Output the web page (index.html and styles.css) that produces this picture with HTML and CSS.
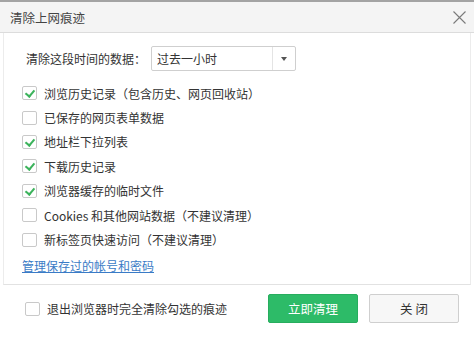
FILE: index.html
```html
<!DOCTYPE html>
<html lang="zh-CN">
<head>
    <meta charset="UTF-8">
    <title>清除上网痕迹</title>
    <link rel="stylesheet" href="styles.css">
</head>
<body>
    <div class="dialog">
        <div class="dialog-header">
            <span class="dialog-title">清除上网痕迹</span>
            <svg class="close-icon" width="13" height="13" viewBox="0 0 13 13">
                <path d="M0.5 0.5 L12.5 12.5 M12.5 0.5 L0.5 12.5" stroke="#7a7a7a" stroke-width="1.1" fill="none"/>
            </svg>
        </div>

        <div class="dialog-body">
            <div class="time-row">
                <span class="time-label">清除这段时间的数据：</span>
                <div class="select">
                    <span class="select-value">过去一小时</span>
                    <span class="select-arrow"></span>
                </div>
            </div>

            <ul class="options">
                <li class="option"><span class="checkbox checked"></span>浏览历史记录（包含历史、网页回收站）</li>
                <li class="option"><span class="checkbox"></span>已保存的网页表单数据</li>
                <li class="option"><span class="checkbox checked"></span>地址栏下拉列表</li>
                <li class="option"><span class="checkbox checked"></span>下载历史记录</li>
                <li class="option"><span class="checkbox checked"></span>浏览器缓存的临时文件</li>
                <li class="option"><span class="checkbox"></span>Cookies 和其他网站数据（不建议清理）</li>
                <li class="option"><span class="checkbox"></span>新标签页快速访问（不建议清理）</li>
            </ul>

            <a class="manage-link" href="#">管理保存过的帐号和密码</a>
        </div>

        <div class="dialog-footer">
            <label class="option exit-option"><span class="checkbox"></span>退出浏览器时完全清除勾选的痕迹</label>
            <button class="btn btn-primary">立即清理</button>
            <button class="btn btn-default">关 闭</button>
        </div>
    </div>
</body>
</html>
```

FILE: styles.css
```css
:root {
    --green: #2dbb68;
    --check: #3cb35c;
    --border: #c9c9c9;
    --text: #333;
}

* {
    box-sizing: border-box;
    margin: 0;
    padding: 0;
}

body {
    width: 474px;
    height: 338px;
    overflow: hidden;
    background: #fff;
    font-family: "Noto Sans CJK SC", "Liberation Sans", sans-serif;
    font-size: 12px;
    color: var(--text);
}

.dialog {
    height: 338px;
    display: flex;
    flex-direction: column;
}

.dialog-header {
    height: 33px;
    border-top: 2px solid #a3a3a3;
    border-bottom: 1px solid #dcdcdc;
    background: #f4f4f4;
    display: flex;
    align-items: center;
    justify-content: space-between;
    padding: 0 8px 0 10px;
}

.dialog-title {
    font-size: 12.5px;
    color: #444;
}

.close-icon {
    margin-top: 1px;
}

.dialog-body {
    margin: 0 3px;
    border-left: 1px solid #ececec;
    border-right: 1px solid #ececec;
    border-bottom: 1px solid #e2e2e2;
    padding: 13px 0 0 18px;
    height: 252px;
}

.time-row {
    display: flex;
    align-items: center;
    padding-left: 4px;
}

.time-label {
    width: 125px;
}

.select {
    width: 145px;
    height: 25px;
    border: 1px solid #cfcfcf;
    border-radius: 2px;
    display: flex;
    align-items: center;
}

.select-value {
    flex: 1;
    padding-left: 5px;
}

.select-arrow {
    width: 23px;
    height: 23px;
    border-left: 1px solid #e4e4e4;
    position: relative;
}

.select-arrow::after {
    content: "";
    position: absolute;
    left: 8px;
    top: 10px;
    border-left: 3.5px solid transparent;
    border-right: 3.5px solid transparent;
    border-top: 4px solid #555;
}

.options {
    list-style: none;
    margin-top: 10px;
}

.option {
    height: 24.4px;
    display: flex;
    align-items: center;
}

.checkbox {
    width: 15px;
    height: 14px;
    border: 1px solid var(--border);
    border-radius: 2px;
    background: #fff;
    margin-right: 7px;
    position: relative;
    flex: none;
}

.checkbox.checked::after {
    content: "";
    position: absolute;
    left: 4px;
    top: 1px;
    width: 4px;
    height: 7px;
    border-right: 2px solid var(--check);
    border-bottom: 2px solid var(--check);
    transform: rotate(40deg);
}

.manage-link {
    display: inline-block;
    margin-top: 5px;
    color: #3a7bc6;
    text-decoration: underline;
}

.dialog-footer {
    flex: 1;
    display: flex;
    align-items: flex-start;
    padding: 9px 0 0 25px;
}

.exit-option {
    height: 29px;
    width: 243px;
}

.btn {
    width: 90px;
    height: 29px;
    border-radius: 2px;
    font-family: inherit;
    font-size: 12.5px;
}

.btn-primary {
    background: var(--green);
    border: 1px solid #27ad5e;
    color: #fff;
}

.btn-default {
    margin-left: 11px;
    background: #f7f7f7;
    border: 1px solid #cfcfcf;
    color: #333;
}
```
